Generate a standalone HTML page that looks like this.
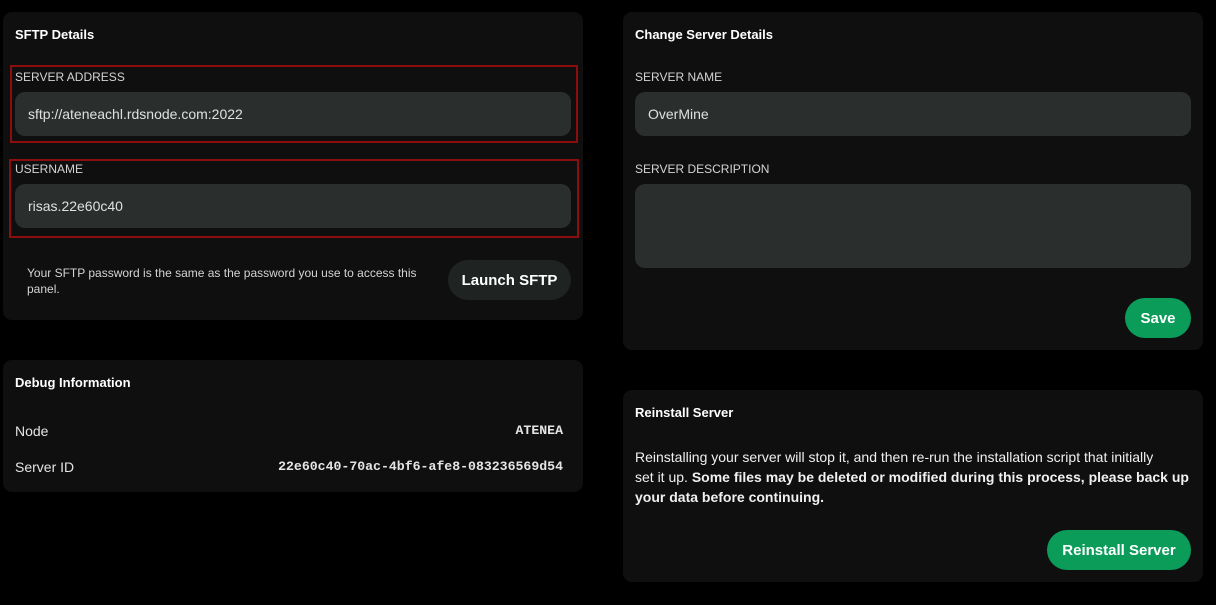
<!DOCTYPE html>
<html><head><style>
*{margin:0;padding:0;box-sizing:border-box}
body{width:1216px;height:605px;background:#000;font-family:"Liberation Sans",sans-serif;color:#e5e5e5;position:relative;overflow:hidden}
.card{position:absolute;background:#0f0f0f;border-radius:9px}
.abs{position:absolute}
.h{font-weight:bold;font-size:13px;color:#fff}
.lbl{font-size:12px;color:#d4d4d4}
.inp{position:absolute;background:#2a2f2e;border-radius:10px;font-size:14px;color:#e0e0e0;padding-left:13px;display:flex;align-items:center}
.red{position:absolute;border:2px solid #8b0d0d}
.btn{position:absolute;border-radius:20px;display:flex;align-items:center;justify-content:center;font-weight:bold;font-size:15px;color:#fff}
.mono{font-family:"Liberation Mono",monospace;font-size:13.2px;font-weight:bold}
</style></head><body>
<div class="card" style="left:3px;top:12px;width:580px;height:308px"></div>
<div class="abs h" style="left:15px;top:27px">SFTP Details</div>
<div class="red" style="left:10px;top:65px;width:568px;height:78px"></div>
<div class="abs lbl" style="left:15px;top:70px">SERVER ADDRESS</div>
<div class="inp" style="left:15px;top:92px;width:556px;height:44px">sftp://ateneachl.rdsnode.com:2022</div>
<div class="red" style="left:9px;top:159px;width:570px;height:79px"></div>
<div class="abs lbl" style="left:15px;top:162px">USERNAME</div>
<div class="inp" style="left:15px;top:184px;width:556px;height:44px">risas.22e60c40</div>
<div class="abs" style="left:27px;top:265px;width:400px;font-size:12px;line-height:16px;color:#d4d4d4">Your SFTP password is the same as the password you use to access this panel.</div>
<div class="btn" style="left:448px;top:260px;width:123px;height:40px;background:#1f2322">Launch SFTP</div>

<div class="card" style="left:3px;top:360px;width:580px;height:132px"></div>
<div class="abs h" style="left:15px;top:375px">Debug Information</div>
<div class="abs" style="left:15px;top:423px;font-size:14px">Node</div>
<div class="abs mono" style="right:653px;top:423px">ATENEA</div>
<div class="abs" style="left:15px;top:459px;font-size:14px">Server ID</div>
<div class="abs mono" style="right:653px;top:459px">22e60c40-70ac-4bf6-afe8-083236569d54</div>

<div class="card" style="left:623px;top:12px;width:580px;height:338px"></div>
<div class="abs h" style="left:635px;top:27px">Change Server Details</div>
<div class="abs lbl" style="left:635px;top:70px">SERVER NAME</div>
<div class="inp" style="left:635px;top:92px;width:556px;height:44px">OverMine</div>
<div class="abs lbl" style="left:635px;top:162px">SERVER DESCRIPTION</div>
<div class="inp" style="left:635px;top:184px;width:556px;height:84px"></div>
<div class="btn" style="left:1125px;top:298px;width:66px;height:40px;background:#0b9c5a">Save</div>

<div class="card" style="left:623px;top:390px;width:580px;height:192px"></div>
<div class="abs h" style="left:635px;top:405px">Reinstall Server</div>
<div class="abs" style="left:635px;top:447px;width:556px;font-size:14px;line-height:20px;color:#f0f0f0">Reinstalling your server will stop it, and then re-run the installation script that initially<br>set it up. <b>Some files may be deleted or modified during this process, please back up your data before continuing.</b></div>
<div class="btn" style="left:1047px;top:530px;width:144px;height:40px;background:#0b9c5a">Reinstall Server</div>
</body></html>
